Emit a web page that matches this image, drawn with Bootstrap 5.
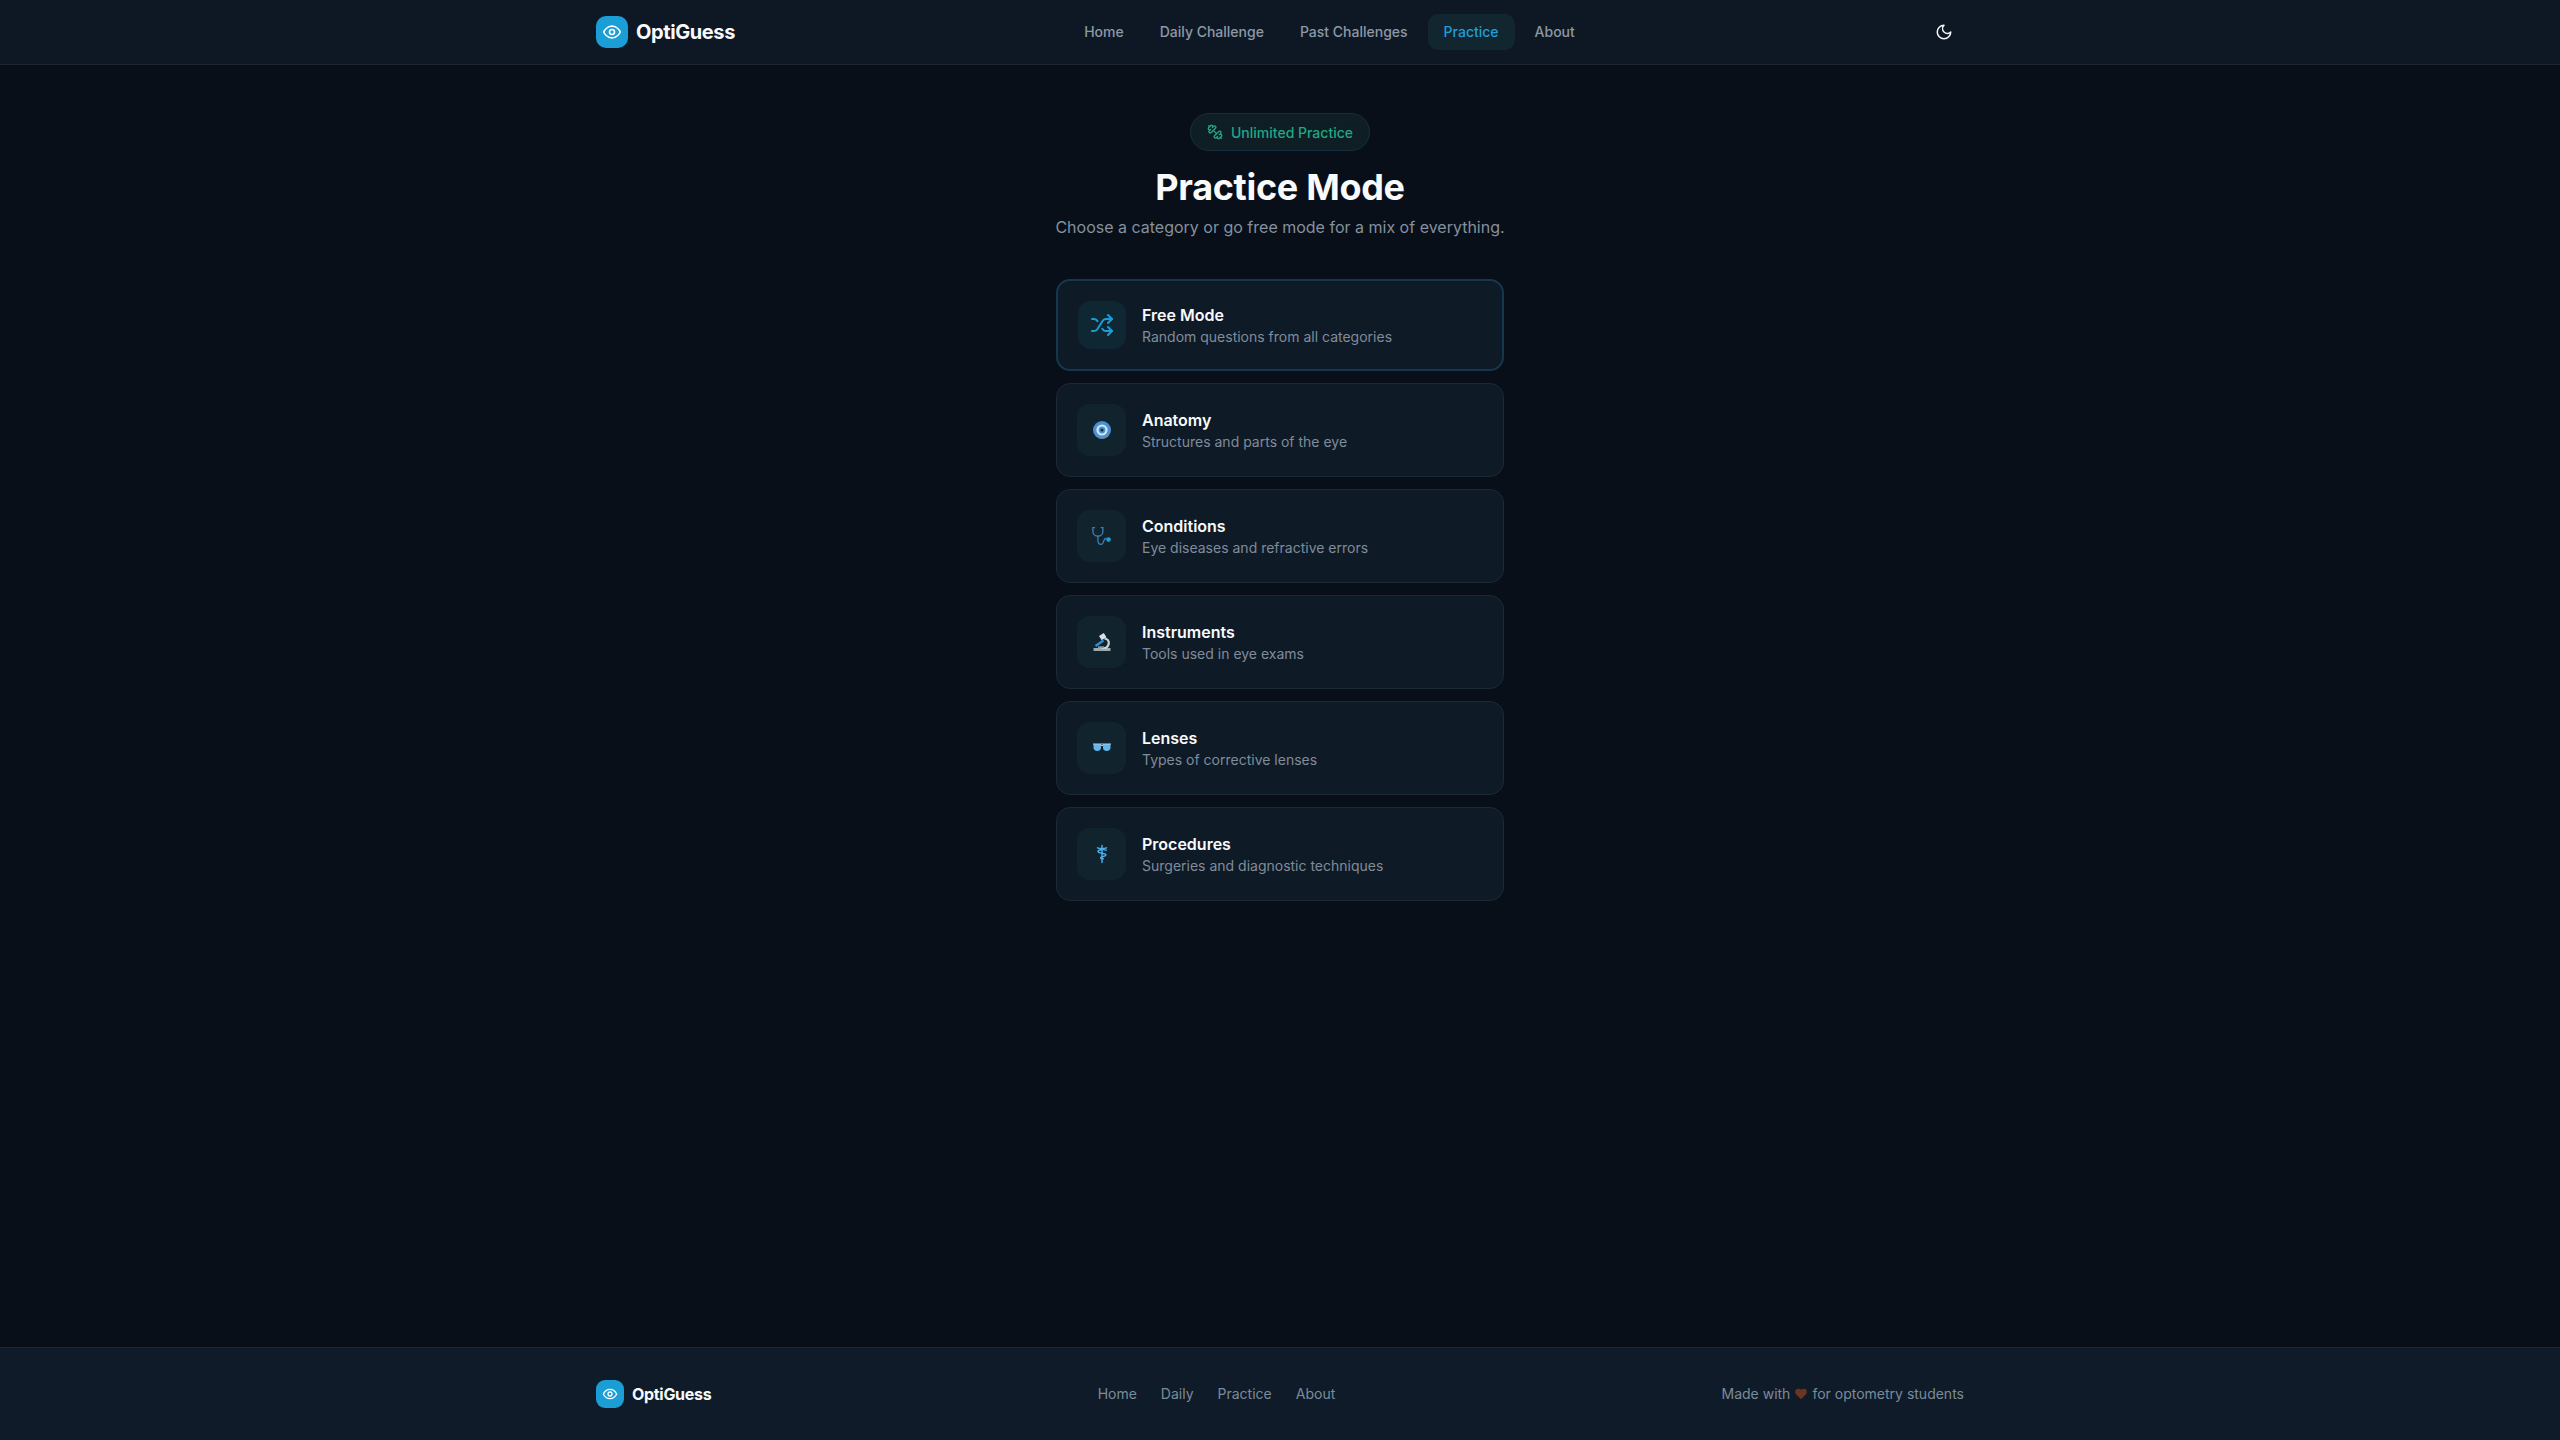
<!DOCTYPE html>
<html lang="en">
<head>
    <title>OptiGuess - Practice Mode</title>
    <meta name="viewport" content="width=device-width, initial-scale=1">
    <link href="https://cdn.jsdelivr.net/npm/bootstrap@5.3.0/dist/css/bootstrap.min.css" rel="stylesheet">
    <style>
        body {
            background-color: #090f18;
            font-family: "Inter", "Liberation Sans", sans-serif;
            color: #f4f7fa;
        }
        .top-bar {
            background: #0e1825;
            border-bottom: 1px solid #1c2733;
            height: 65px;
            padding: 0;
        }
        .wrap {
            max-width: 1400px;
            width: 100%;
            margin: 0 auto;
            padding: 0 16px;
        }
        .logo-box {
            width: 32px;
            height: 32px;
            border-radius: 10px;
            background: #1b9ed6;
        }
        .logo-box.small-logo {
            width: 28px;
            height: 28px;
            border-radius: 9px;
        }
        .logo-text {
            font-size: 20px;
            font-weight: 700;
            color: #f8fafc;
            letter-spacing: -0.4px;
        }
        .logo-text.small-logo {
            font-size: 16px;
            letter-spacing: -0.3px;
        }
        .top-link {
            font-size: 14px;
            font-weight: 500;
            line-height: 20px;
            padding: 8px 16px;
            border-radius: 10px;
            color: #8d99a5;
        }
        .top-link.current {
            background: #12262f;
            color: #1f9edb;
        }
        .theme-btn {
            width: 40px;
            height: 40px;
            color: #f4f7fa;
        }
        .tag-pill {
            height: 38px;
            padding: 0 16px;
            border-radius: 19px;
            background: #0e1e24;
            border: 1px solid #15303c;
            color: #22a783;
            font-size: 14px;
            font-weight: 500;
        }
        .page-title {
            font-size: 36px;
            line-height: 40px;
            font-weight: 700;
            color: #f8fafc;
            letter-spacing: -0.3px;
            margin-bottom: 8px;
        }
        .page-sub {
            font-size: 16px;
            line-height: 24px;
            color: #84919e;
            margin-bottom: 40px;
        }
        .mode-list {
            width: 448px;
            gap: 12px;
        }
        .mode-card {
            background: #0f1a27;
            border: 1px solid #1c2a36;
            border-radius: 14px;
            padding: 20px;
        }
        .mode-card.picked {
            border: 2px solid #14374e;
        }
        .mode-icon {
            width: 49px;
            height: 52px;
            border-radius: 13px;
            background: #11242e;
            flex-shrink: 0;
        }
        .picked .mode-icon {
            width: 48px;
            height: 48px;
            background: #0f2633;
        }
        .mode-name {
            font-size: 16px;
            line-height: 24px;
            font-weight: 600;
            color: #f8fafc;
        }
        .mode-desc {
            font-size: 14px;
            line-height: 20px;
            color: #7f8c9a;
        }
        .bottom-bar {
            background: #0f1b28;
            border-top: 1px solid #1c2733;
            padding: 32px 0;
        }
        .bottom-link {
            font-size: 14px;
            line-height: 20px;
            color: #7b8b9b;
        }
        .made-with {
            font-size: 14px;
            line-height: 20px;
            color: #7b8b9b;
        }
    </style>
</head>
<body>
<div class="d-flex flex-column min-vh-100">

    <nav class="top-bar d-flex align-items-center">
        <div class="wrap d-flex align-items-center justify-content-between">
            <a href="#" class="d-flex align-items-center gap-2 text-decoration-none">
                <span class="logo-box d-flex align-items-center justify-content-center">
                    <svg width="20" height="20" viewBox="0 0 24 24" fill="none" stroke="#fff" stroke-width="2" stroke-linecap="round" stroke-linejoin="round"><path d="M2 12s3.5-7 10-7 10 7 10 7-3.5 7-10 7-10-7-10-7Z"/><circle cx="12" cy="12" r="3"/></svg>
                </span>
                <span class="logo-text">OptiGuess</span>
            </a>
            <div class="d-flex align-items-center gap-1">
                <a href="#" class="top-link text-decoration-none">Home</a>
                <a href="#" class="top-link text-decoration-none">Daily Challenge</a>
                <a href="#" class="top-link text-decoration-none">Past Challenges</a>
                <a href="#" class="top-link current text-decoration-none">Practice</a>
                <a href="#" class="top-link text-decoration-none">About</a>
            </div>
            <div class="theme-btn d-flex align-items-center justify-content-center">
                <svg width="18" height="18" viewBox="0 0 24 24" fill="none" stroke="currentColor" stroke-width="2" stroke-linecap="round" stroke-linejoin="round"><path d="M12 3a6 6 0 0 0 9 9 9 9 0 1 1-9-9Z"/></svg>
            </div>
        </div>
    </nav>

    <main class="flex-grow-1 d-flex flex-column align-items-center pt-5">
        <div class="tag-pill d-inline-flex align-items-center gap-2 mb-3">
            <svg width="16" height="16" viewBox="0 0 24 24" fill="none" stroke="currentColor" stroke-width="2" stroke-linecap="round" stroke-linejoin="round"><path d="M14.4 14.4 9.6 9.6"/><path d="M18.657 21.485a2 2 0 1 1-2.829-2.828l-1.767 1.768a2 2 0 1 1-2.829-2.829l6.364-6.364a2 2 0 1 1 2.829 2.829l-1.768 1.767a2 2 0 1 1 2.828 2.829z"/><path d="m21.5 21.5-1.4-1.4"/><path d="M3.9 3.9 2.5 2.5"/><path d="M6.404 12.768a2 2 0 1 1-2.829-2.829l1.768-1.767a2 2 0 1 1-2.828-2.829l2.828-2.828a2 2 0 1 1 2.829 2.828l1.767-1.768a2 2 0 1 1 2.829 2.829z"/></svg>
            Unlimited Practice
        </div>
        <h1 class="page-title">Practice Mode</h1>
        <p class="page-sub">Choose a category or go free mode for a mix of everything.</p>

        <div class="mode-list d-flex flex-column pb-5">
            <a href="#" class="mode-card picked d-flex align-items-center gap-3 text-decoration-none">
                <span class="mode-icon d-flex align-items-center justify-content-center">
                    <svg width="24" height="24" viewBox="0 0 24 24" fill="none" stroke="#1b9ed6" stroke-width="2" stroke-linecap="round" stroke-linejoin="round"><path d="m18 14 4 4-4 4"/><path d="m18 2 4 4-4 4"/><path d="M2 18h1.973a4 4 0 0 0 3.3-1.7l5.454-8.6a4 4 0 0 1 3.3-1.7H22"/><path d="M2 6h1.972a4 4 0 0 1 3.6 2.2"/><path d="M22 18h-6.041a4 4 0 0 1-3.3-1.8l-.359-.45"/></svg>
                </span>
                <span>
                    <span class="mode-name d-block">Free Mode</span>
                    <span class="mode-desc d-block">Random questions from all categories</span>
                </span>
            </a>
            <a href="#" class="mode-card d-flex align-items-center gap-3 text-decoration-none">
                <span class="mode-icon d-flex align-items-center justify-content-center">
                    <svg width="20" height="20" viewBox="0 0 20 20"><circle cx="10" cy="10" r="9" fill="#4a90d2"/><circle cx="10" cy="10" r="5.6" fill="#d5e6f2"/><circle cx="10" cy="10" r="3.4" fill="#4d94d4"/><circle cx="10" cy="10" r="1.6" fill="#12324a"/><path d="M16 15a8.6 8.6 0 0 1-9 2.6" fill="none" stroke="#7c8a96" stroke-width="1.4"/></svg>
                </span>
                <span>
                    <span class="mode-name d-block">Anatomy</span>
                    <span class="mode-desc d-block">Structures and parts of the eye</span>
                </span>
            </a>
            <a href="#" class="mode-card d-flex align-items-center gap-3 text-decoration-none">
                <span class="mode-icon d-flex align-items-center justify-content-center">
                    <svg width="20" height="20" viewBox="0 0 20 20" fill="none" stroke="#3f7fb6" stroke-width="1.3" stroke-linecap="round"><path d="M2.6 1.6H.9v3.600c0 3 2.300 5 5 5s5-2 5-5V1.600H9.200"/><path d="M5.900 10.200v3.800c0 2.600 1.400 4.400 3.200 4.400 3.100 0 1.900-6 4.900-6"/><circle cx="16.500" cy="13.600" r="2.300" fill="#1b9ed6" stroke="none"/></svg>
                </span>
                <span>
                    <span class="mode-name d-block">Conditions</span>
                    <span class="mode-desc d-block">Eye diseases and refractive errors</span>
                </span>
            </a>
            <a href="#" class="mode-card d-flex align-items-center gap-3 text-decoration-none">
                <span class="mode-icon d-flex align-items-center justify-content-center">
                    <svg width="20" height="20" viewBox="0 0 20 20"><rect x="1.500" y="16" width="17" height="3" rx=".5" fill="#9aa8b0"/><path d="M12.500 6.500c2.900.4 4.300 2.300 4.300 4.600 0 2.200-1.200 3.800-3 4.900H9.500" fill="none" stroke="#c6d0d5" stroke-width="2.200"/><path d="m7 4 4.800-3 2.700 4.200-4.800 3Z" fill="#d9e0e3"/><path d="M3.500 14 11.500 8.500" stroke="#2f8fd6" stroke-width="2.400"/><rect x="6" y="14.300" width="6" height="1.700" fill="#8e9aa3"/></svg>
                </span>
                <span>
                    <span class="mode-name d-block">Instruments</span>
                    <span class="mode-desc d-block">Tools used in eye exams</span>
                </span>
            </a>
            <a href="#" class="mode-card d-flex align-items-center gap-3 text-decoration-none">
                <span class="mode-icon d-flex align-items-center justify-content-center">
                    <svg width="20" height="20" viewBox="0 0 20 20"><path d="M1.500 6h7.500v3.400c0 2-1.300 3.600-3.700 3.600S1.500 11.400 1.500 9.400Z" fill="#64b5ee"/><path d="M11 6h7.500v3.400c0 2-1.300 3.600-3.800 3.600S11 11.400 11 9.400Z" fill="#64b5ee"/><path d="M1 6h18M9 7.500h2" stroke="#a9cde4" stroke-width="1.100"/></svg>
                </span>
                <span>
                    <span class="mode-name d-block">Lenses</span>
                    <span class="mode-desc d-block">Types of corrective lenses</span>
                </span>
            </a>
            <a href="#" class="mode-card d-flex align-items-center gap-3 text-decoration-none">
                <span class="mode-icon d-flex align-items-center justify-content-center">
                    <svg width="20" height="20" viewBox="0 0 20 20" fill="none" stroke="#4fb0ec" stroke-width="1.400" stroke-linecap="round"><path d="M10 1.500v17"/><path d="M5.500 3.800c2 .9 7 .9 9 0"/><path d="M14.200 6.200c-2-.9-8.200-.9-8.200 1.300 0 2.300 8 1.200 8 3.500 0 1.800-5.400 1.100-5.400 2.800 0 1 1.300 1.200 2.700 1"/></svg>
                </span>
                <span>
                    <span class="mode-name d-block">Procedures</span>
                    <span class="mode-desc d-block">Surgeries and diagnostic techniques</span>
                </span>
            </a>
        </div>
    </main>

    <footer class="bottom-bar">
        <div class="wrap d-flex align-items-center justify-content-between">
            <a href="#" class="d-flex align-items-center gap-2 text-decoration-none">
                <span class="logo-box small-logo d-flex align-items-center justify-content-center">
                    <svg width="16" height="16" viewBox="0 0 24 24" fill="none" stroke="#fff" stroke-width="2" stroke-linecap="round" stroke-linejoin="round"><path d="M2 12s3.500-7 10-7 10 7 10 7-3.500 7-10 7-10-7-10-7Z"/><circle cx="12" cy="12" r="3"/></svg>
                </span>
                <span class="logo-text small-logo">OptiGuess</span>
            </a>
            <div class="d-flex align-items-center gap-4">
                <a href="#" class="bottom-link text-decoration-none">Home</a>
                <a href="#" class="bottom-link text-decoration-none">Daily</a>
                <a href="#" class="bottom-link text-decoration-none">Practice</a>
                <a href="#" class="bottom-link text-decoration-none">About</a>
            </div>
            <div class="made-with d-flex align-items-center gap-1">
                Made with
                <svg width="14" height="14" viewBox="0 0 24 24" fill="#6b3524"><path d="M19 14c1.490-1.460 3-3.210 3-5.500A5.500 5.500 0 0 0 16.500 3c-1.760 0-3 .5-4.500 2-1.500-1.500-2.740-2-4.500-2A5.500 5.500 0 0 0 2 8.500c0 2.300 1.500 4.050 3 5.500l7 7Z"/></svg>
                for optometry students
            </div>
        </div>
    </footer>

</div>
<script src="https://cdn.jsdelivr.net/npm/bootstrap@5.3.0/dist/js/bootstrap.bundle.min.js"></script>
</body>
</html>
